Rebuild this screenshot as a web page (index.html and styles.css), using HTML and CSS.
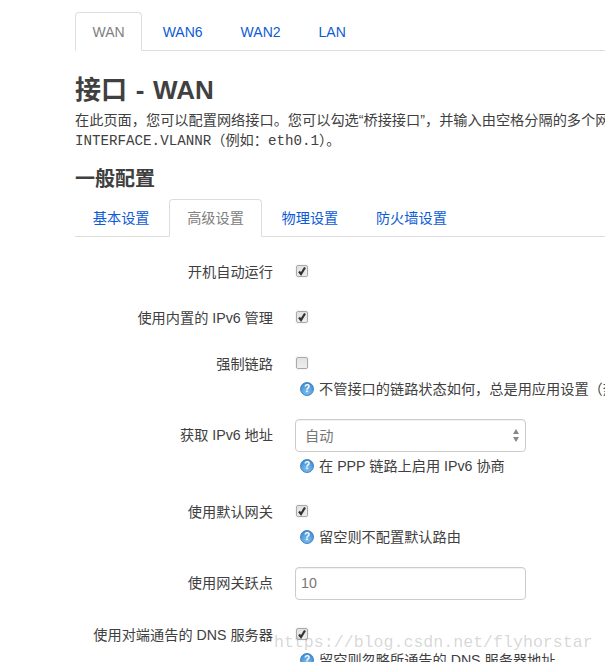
FILE: index.html
```html
<!DOCTYPE html>
<html lang="zh-CN">
<head>
    <meta charset="UTF-8">
    <title>接口 - WAN</title>
    <link rel="stylesheet" href="styles.css">
</head>
<body>
    <div class="container">
        <ul class="tabs top-tabs">
            <li class="active"><a>WAN</a></li>
            <li><a>WAN6</a></li>
            <li><a>WAN2</a></li>
            <li><a>LAN</a></li>
        </ul>

        <h1>接口 - WAN</h1>
        <p class="desc">在此页面，您可以配置网络接口。您可以勾选“桥接接口”，并输入由空格分隔的多个网络接口的名称来桥接多个接口。接口名称中可以使用<br><code>INTERFACE.VLANNR</code>（例如：<code>eth0.1</code>）。</p>

        <h2>一般配置</h2>
        <ul class="tabs sub-tabs">
            <li><a>基本设置</a></li>
            <li class="active"><a>高级设置</a></li>
            <li><a>物理设置</a></li>
            <li><a>防火墙设置</a></li>
        </ul>

        <div class="form">
            <div class="row row-auto">
                <label>开机自动运行</label>
                <div class="field">
                    <span class="check"><svg viewBox="0 0 10 10"><path d="M2 5.5 L4 8 L8 1.5"/></svg></span>
                </div>
            </div>
            <div class="row row-plain">
                <label>使用内置的 IPv6 管理</label>
                <div class="field">
                    <span class="check"><svg viewBox="0 0 10 10"><path d="M2 5.5 L4 8 L8 1.5"/></svg></span>
                </div>
            </div>
            <div class="row row-plain">
                <label>强制链路</label>
                <div class="field">
                    <span class="check"></span>
                    <div class="help"><span class="help-icon">?</span>不管接口的链路状态如何，总是用应用设置（热插拔事件不会触发）</div>
                </div>
            </div>
            <div class="row row-box">
                <label>获取 IPv6 地址</label>
                <div class="field">
                    <div class="select">自动<span class="arrows"><i class="up"></i><i class="down"></i></span></div>
                    <div class="help"><span class="help-icon">?</span>在 PPP 链路上启用 IPv6 协商</div>
                </div>
            </div>
            <div class="row row-plain">
                <label>使用默认网关</label>
                <div class="field">
                    <span class="check"><svg viewBox="0 0 10 10"><path d="M2 5.5 L4 8 L8 1.5"/></svg></span>
                    <div class="help"><span class="help-icon">?</span>留空则不配置默认路由</div>
                </div>
            </div>
            <div class="row row-box">
                <label>使用网关跃点</label>
                <div class="field"><div class="input">10</div></div>
            </div>
            <div class="row row-dns">
                <label>使用对端通告的 DNS 服务器</label>
                <div class="field">
                    <span class="check"><svg viewBox="0 0 10 10"><path d="M2 5.5 L4 8 L8 1.5"/></svg></span>
                    <div class="help"><span class="help-icon">?</span>留空则忽略所通告的 DNS 服务器地址</div>
                </div>
            </div>
        </div>
    </div>
    <div class="watermark">https://blog.csdn.net/flyhorstar</div>
</body>
</html>
```

FILE: styles.css
```css
html, body { margin: 0; height: 662px; overflow: hidden; }
body { position: relative; background: #fff; color: #404040; font-family: "Liberation Sans", "Noto Sans CJK SC", sans-serif; font-size: 14.2px; line-height: 20px; }
.container { padding: 12px 0 0 75px; width: 530px; white-space: nowrap; }

.tabs { display: flex; list-style: none; margin: 0; padding: 0; border-bottom: 1px solid #ddd; }
.tabs li { margin: 0 2px -1px 0; }
.tabs a { display: block; padding: 8px 16.8px; border: 1px solid transparent; border-radius: 4px 4px 0 0; color: #0d5bd6; }
.tabs .active a { color: #808080; background: #fff; border-color: #ddd #ddd #fff; }
.top-tabs { font-size: 14px; }
.top-tabs li { margin-right: 3px; }
.top-tabs a { padding: 9px 16.5px 8px; }

h1 { margin: 23px 0 0; font-size: 26px; line-height: 32px; font-weight: bold; word-spacing: 1.5px; }
.desc { margin: 4px 0 0; }
code { font-family: "Liberation Mono", monospace; font-size: 14.2px; line-height: 1; }
h2 { margin: 16px 0 0; font-size: 20px; line-height: 26px; font-weight: bold; }
.sub-tabs { margin-top: 7px; }

.row { display: grid; grid-template-columns: 198px 1fr; column-gap: 22px; margin-top: 26px; }
.row label { text-align: right; }
.row-auto { margin-top: 25px; }
.row-box { margin-top: 20px; }
.row-box label { padding-top: 6px; }
.row-dns { margin-top: 25px; }

.check { display: block; box-sizing: border-box; width: 12px; height: 12px; margin: 3px 0 0 1px; border: 1px solid #aaa; border-radius: 2px; background: linear-gradient(#e2e2e2, #eee); box-shadow: 0 0 0 1px #f6f6f6; }
.check svg { display: block; width: 10px; height: 10px; fill: none; stroke: #333; stroke-width: 2.2; }

.help { margin: 10px 0 0 5px; display: flex; align-items: center; }
.select + .help { margin-top: 4px; }
.help-icon { flex: none; box-sizing: border-box; width: 14px; height: 14px; margin-right: 5px; border: 1px solid #3f83c4; border-radius: 50%; background: radial-gradient(circle at 50% 75%, #7fc1f0, #2f7fcb); color: #fff; font-size: 10px; font-weight: bold; line-height: 12px; text-align: center; }

.select, .input { box-sizing: border-box; width: 231px; height: 33px; border: 1px solid #ccc; border-radius: 4px; color: #777; background: #fff; box-shadow: inset 0 1px 1px rgba(0, 0, 0, .06); }
.input { padding: 5px 5px; }
.select { display: flex; justify-content: space-between; align-items: center; padding: 0 6px 0 9px; }
.arrows { display: flex; flex-direction: column; gap: 3px; }
.arrows i { display: block; border-left: 3.5px solid transparent; border-right: 3.5px solid transparent; }
.arrows .up { border-bottom: 5px solid #888; }
.arrows .down { border-top: 5px solid #888; }

.watermark { position: absolute; left: 274px; top: 633px; font-family: "Liberation Mono", monospace; font-size: 16.6px; color: rgba(120, 120, 120, .3); white-space: nowrap; }
```
